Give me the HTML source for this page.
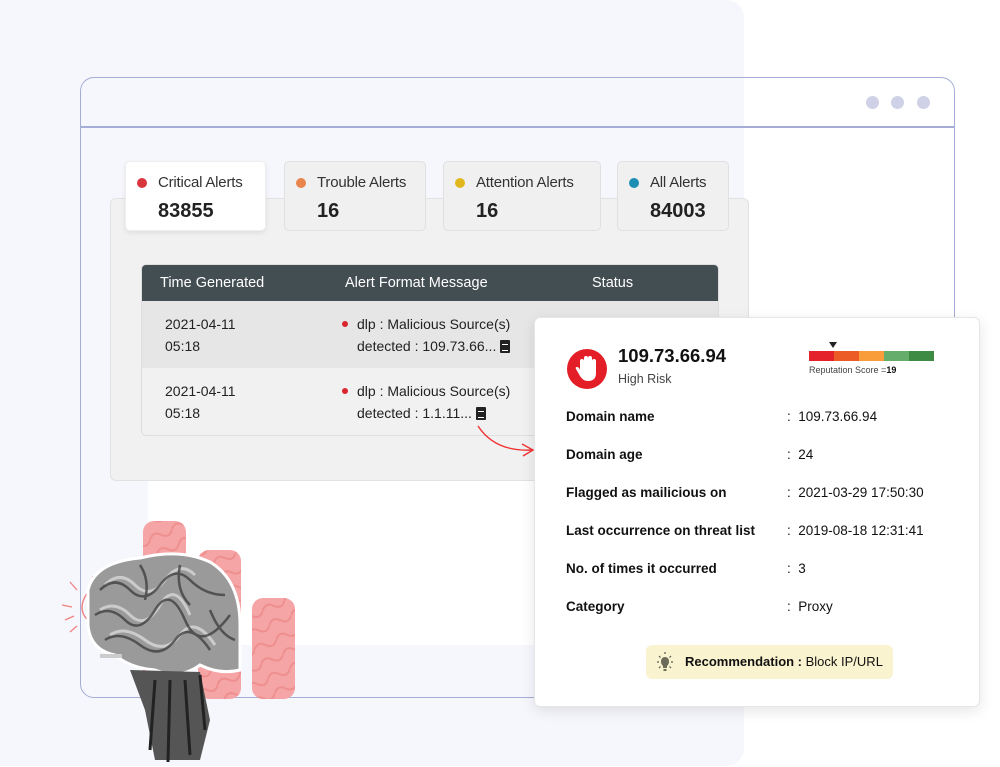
<!DOCTYPE html>
<html><head><meta charset="utf-8"><style>
*{margin:0;padding:0;box-sizing:border-box}
body{width:1000px;height:767px;background:#fff;position:relative;overflow:hidden;font-family:"Liberation Sans",sans-serif;color:#222}
.a{position:absolute}
.tab{position:absolute;top:161px;height:70px;background:#f0f0f0;border:1px solid #e0e0e0;border-radius:5px}
.tab .l{position:absolute;left:32px;top:12px;font-size:15px;color:#333;white-space:nowrap;letter-spacing:-0.2px}
.tab .n{position:absolute;left:32px;top:38px;font-size:20px;font-weight:bold;color:#222}
.tab .d{position:absolute;left:11px;top:16px;width:10px;height:10px;border-radius:50%}
.td{font-size:14px;color:#222;line-height:22px;position:absolute}
.k{position:absolute;left:31px;font-size:13.5px;font-weight:bold;color:#111}
.v{position:absolute;left:252px;font-size:13.5px;color:#111;white-space:pre}
.doc{display:inline-block;width:10px;height:13px;background:#222;border-radius:1px;vertical-align:-2px;margin-left:4px;position:relative}
.doc:after{content:"";position:absolute;left:2px;top:4px;width:6px;height:5px;border-top:1px solid #fff;border-bottom:1px solid #fff}
</style></head><body>
<div class="a" style="left:0;top:0;width:744px;height:766px;background:#f6f7fd;border-radius:0 18px 18px 0"></div>
<div class="a" style="left:148px;top:480px;width:600px;height:165px;background:#fff"></div>
<!-- window -->
<div class="a" style="left:80px;top:77px;width:875px;height:621px;border:1.5px solid #a5acd6;border-radius:14px"></div>
<div class="a" style="left:81px;top:126px;width:873px;height:1.5px;background:#a5acd6"></div>
<div class="a" style="left:866px;top:96px;width:13px;height:13px;border-radius:50%;background:#cfd2e6"></div>
<div class="a" style="left:891px;top:96px;width:13px;height:13px;border-radius:50%;background:#cfd2e6"></div>
<div class="a" style="left:917px;top:96px;width:13px;height:13px;border-radius:50%;background:#cfd2e6"></div>
<!-- gray panel -->
<div class="a" style="left:110px;top:198px;width:639px;height:283px;background:#f1f1f1;border:1px solid #e2e2e2;border-radius:6px"></div>
<div class="tab" style="left:125px;width:141px;background:#fff;border-color:#eee;box-shadow:0 2px 6px rgba(0,0,0,.08)"><span class="d" style="background:#d9363e"></span><span class="l">Critical Alerts</span><span class="n">83855</span></div>
<div class="tab" style="left:284px;width:142px"><span class="d" style="background:#e9844a"></span><span class="l">Trouble Alerts</span><span class="n">16</span></div>
<div class="tab" style="left:443px;width:158px"><span class="d" style="background:#e0b81e"></span><span class="l">Attention Alerts</span><span class="n">16</span></div>
<div class="tab" style="left:617px;width:112px"><span class="d" style="background:#1e8fb3"></span><span class="l">All Alerts</span><span class="n">84003</span></div>
<!-- table -->
<div class="a" style="left:141px;top:264px;width:578px;height:172px;background:#f1f1f1;border:1px solid #dedede;border-radius:5px;overflow:hidden">
 <div class="a" style="left:0;top:0;width:578px;height:36px;background:#434e52"></div>
 <div class="a" style="left:0;top:36px;width:578px;height:67px;background:#e6e6e6"></div>
</div>
<div class="a" style="left:160px;top:275px;color:#fff;font-size:14.5px">Time Generated</div>
<div class="a" style="left:345px;top:275px;color:#fff;font-size:14.5px">Alert Format Message</div>
<div class="a" style="left:592px;top:275px;color:#fff;font-size:14.5px">Status</div>
<div class="td" style="left:165px;top:313px">2021-04-11<br>05:18</div>
<div class="td" style="left:165px;top:380px">2021-04-11<br>05:18</div>
<div class="a" style="left:342px;top:321px;width:6px;height:6px;border-radius:50%;background:#d9262e"></div>
<div class="a" style="left:342px;top:388px;width:6px;height:6px;border-radius:50%;background:#d9262e"></div>
<div class="td" style="left:357px;top:313px">dlp : Malicious Source(s)<br>detected : 109.73.66...<span class="doc"></span></div>
<div class="td" style="left:357px;top:380px">dlp : Malicious Source(s)<br>detected : 1.1.11...<span class="doc"></span></div>
<svg class="a" style="left:470px;top:420px" width="70" height="40"><path d="M8 6 Q25 32 62 30" fill="none" stroke="#e33" stroke-width="1.4"/><path d="M52 24 L63 30 L53 36" fill="none" stroke="#e33" stroke-width="1.4"/></svg>
<!-- bars -->
<svg class="a" style="left:140px;top:518px" width="160" height="182">
<defs><pattern id="w" width="24" height="16" patternUnits="userSpaceOnUse" patternTransform="rotate(-25)"><path d="M0 8 Q6 1 12 8 T24 8" fill="none" stroke="#ee8e8e" stroke-width="2"/></pattern></defs>
<rect x="3" y="3" width="43" height="178" rx="11" fill="#f5a5a5"/><rect x="3" y="3" width="43" height="178" rx="11" fill="url(#w)"/>
<rect x="58" y="32" width="43" height="149" rx="11" fill="#f5a5a5"/><rect x="58" y="32" width="43" height="149" rx="11" fill="url(#w)"/>
<rect x="112" y="80" width="43" height="101" rx="11" fill="#f5a5a5"/><rect x="112" y="80" width="43" height="101" rx="11" fill="url(#w)"/>
</svg>
<!-- brain -->
<svg class="a" style="left:60px;top:550px" width="190" height="215">
<g stroke="#f08080" stroke-width="1.3" fill="none"><path d="M28 42 Q15 60 30 72"/><path d="M2 55 L12 57"/><path d="M5 70 L14 66"/><path d="M10 32 L17 40"/><path d="M33 26 L32 34"/><path d="M10 82 L17 76"/></g>
<path d="M28 40 Q35 12 80 8 Q120 -2 150 12 Q180 30 180 75 L180 120 Q160 125 140 115 Q120 130 95 120 Q70 118 55 105 Q30 100 28 75 Z" fill="#9a9a9a" stroke="#fff" stroke-width="3"/>
<g stroke="#d8d8d8" stroke-width="3" fill="none" opacity=".8"><path d="M45 35 Q60 20 75 35 T105 30 T135 25"/><path d="M40 60 Q55 50 70 65 T100 55 T130 65"/><path d="M50 85 Q65 75 85 90 T120 85 T155 95"/></g>
<g stroke="#3a3a3a" stroke-width="2.5" fill="none" opacity=".75"><path d="M40 40 Q55 25 70 40 T100 35 T130 30 T165 45"/><path d="M35 65 Q50 55 65 70 T95 60 T125 70 T170 65"/><path d="M45 90 Q60 80 80 95 T115 90 T150 100"/><path d="M80 15 Q90 30 85 50"/><path d="M120 15 Q115 40 130 55"/><path d="M150 60 Q160 85 175 90"/></g>
<path d="M70 120 L140 122 L150 170 L140 210 L95 210 L85 160 Z" fill="#555"/>
<g stroke="#222" stroke-width="3"><path d="M95 130 L90 200"/><path d="M110 130 L108 212"/><path d="M125 130 L130 205"/><path d="M140 125 L145 180"/></g>
<rect x="40" y="104" width="22" height="4" fill="#ccc"/>
</svg>
<!-- popup -->
<div class="a" style="left:534px;top:317px;width:446px;height:390px;background:#fff;border:1px solid #e6e6e6;border-radius:6px;box-shadow:0 4px 14px rgba(0,0,0,.1)">
 <svg class="a" style="left:31px;top:30px" width="42" height="42"><circle cx="21" cy="21" r="20" fill="#e31e26"/><path d="M14 22 L14 13 Q14 11 16 11 Q18 11 18 13 L18 20 L18 10 Q18 8 20 8 Q22 8 22 10 L22 20 L22 10 Q22 8 24 8 Q26 8 26 10 L26 21 L26 13 Q26 11 28 11 Q30 11 30 13 L30 25 Q30 33 22 33 Q17 33 14 28 L10 21 Q9 19 11 19 Q13 19 14 22 Z" fill="#fff"/></svg>
 <div class="a" style="left:83px;top:27px;font-size:18.5px;font-weight:bold;color:#111">109.73.66.94</div>
 <div class="a" style="left:83px;top:54px;font-size:12.5px;color:#444">High Risk</div>
 <svg class="a" style="left:274px;top:23px" width="130" height="20"><path d="M20 1 L28 1 L24 7 Z" fill="#222"/><rect x="0" y="10" width="25" height="10" fill="#e4222b"/><rect x="25" y="10" width="25" height="10" fill="#ec5a26"/><rect x="50" y="10" width="25" height="10" fill="#f99c3a"/><rect x="75" y="10" width="25" height="10" fill="#65ad6a"/><rect x="100" y="10" width="25" height="10" fill="#3e8c43"/></svg>
 <div class="a" style="left:274px;top:47px;font-size:9px;color:#444">Reputation Score =<b style="color:#111">19</b></div>
 <div class="k" style="top:91px">Domain name</div><div class="v" style="top:91px">:  109.73.66.94</div>
 <div class="k" style="top:129px">Domain age</div><div class="v" style="top:129px">:  24</div>
 <div class="k" style="top:167px">Flagged as mailicious on</div><div class="v" style="top:167px">:  2021-03-29 17:50:30</div>
 <div class="k" style="top:205px">Last occurrence on threat list</div><div class="v" style="top:205px">:  2019-08-18 12:31:41</div>
 <div class="k" style="top:243px">No. of times it occurred</div><div class="v" style="top:243px">:  3</div>
 <div class="k" style="top:281px">Category</div><div class="v" style="top:281px">:  Proxy</div>
 <div class="a" style="left:111px;top:327px;width:247px;height:34px;background:#faf3cf;border-radius:6px"></div>
 <svg class="a" style="left:119px;top:333px" width="22" height="22"><g stroke="#555" stroke-width="1.2"><path d="M11 1 V3"/><path d="M3 11 H5"/><path d="M17 11 H19"/><path d="M5 5 L6.5 6.5"/><path d="M17 5 L15.5 6.5"/><path d="M5 17 L6.5 15.5"/><path d="M17 17 L15.5 15.5"/></g><path d="M7 11 Q7 6 11 6 Q15 6 15 11 Q15 13 13 15 L13 17 L9 17 L9 15 Q7 13 7 11 Z" fill="#6b6b5a"/><rect x="9.5" y="18" width="3" height="2" fill="#6b6b5a"/></svg>
 <div class="a" style="left:150px;top:336px;font-size:13px;color:#111"><b>Recommendation :</b> Block IP/URL</div>
</div>
</body></html>
